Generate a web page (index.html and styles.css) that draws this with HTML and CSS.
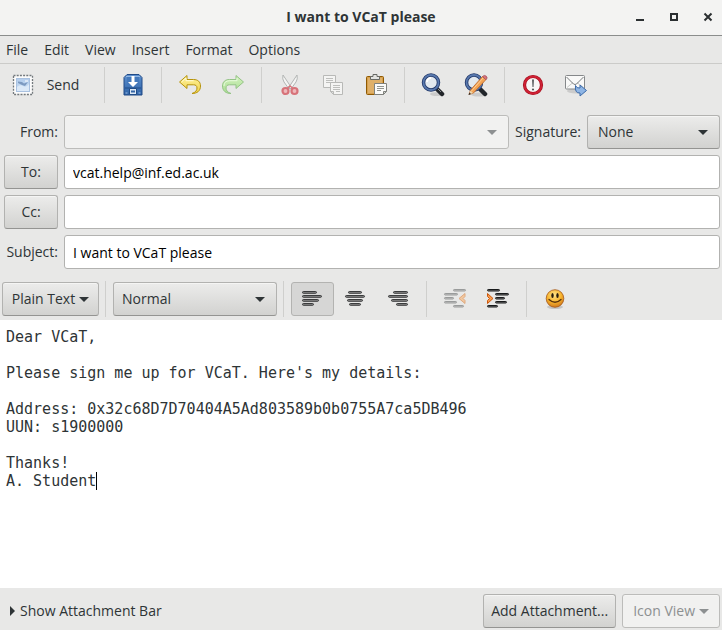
FILE: index.html
```html
<!DOCTYPE html>
<html lang="en">
<head>
<meta charset="utf-8">
<meta name="viewport" content="width=device-width, initial-scale=1">
<title>I want to VCaT please</title>
<link rel="stylesheet" href="styles.css">
</head>
<body>
<svg class="defs" width="0" height="0" aria-hidden="true">
  <defs>
    <linearGradient id="gold" x1="0" y1="0" x2="0" y2="1"><stop offset="0" stop-color="#fff3a0"/><stop offset="1" stop-color="#f0d24a"/></linearGradient>
    <linearGradient id="leaf" x1="0" y1="0" x2="0" y2="1"><stop offset="0" stop-color="#d3f2be"/><stop offset="1" stop-color="#a9dd92"/></linearGradient>
    <linearGradient id="ink" x1="0" y1="0" x2="0" y2="1"><stop offset="0" stop-color="#5d90cf"/><stop offset="1" stop-color="#2e62a6"/></linearGradient>
    <linearGradient id="sky" x1="0" y1="0" x2="0" y2="1"><stop offset="0" stop-color="#b3cdec"/><stop offset="1" stop-color="#c9def3"/></linearGradient>
    <radialGradient id="face" cx=".45" cy=".3" r=".75"><stop offset="0" stop-color="#ffe38a"/><stop offset=".55" stop-color="#f7b32c"/><stop offset="1" stop-color="#c9701a"/></radialGradient>
  </defs>
</svg>

<header class="titlebar">
  <h1 class="title">I want to VCaT please</h1>
  <div class="window-buttons">
    <button class="window-button" type="button" aria-label="Minimize"><svg width="10" height="10" viewBox="0 0 10 10"><path d="M1 8h8" stroke="#2b2f31" stroke-width="2"/></svg></button>
    <button class="window-button" type="button" aria-label="Maximize"><svg width="10" height="10" viewBox="0 0 10 10"><path d="M2 2h6v6H2z" fill="none" stroke="#2b2f31" stroke-width="2"/></svg></button>
    <button class="window-button" type="button" aria-label="Close"><svg width="10" height="10" viewBox="0 0 10 10"><path d="M1.500 1.500l7 7M8.500 1.500l-7 7" stroke="#2b2f31" stroke-width="2"/></svg></button>
  </div>
</header>

<nav class="menubar">
  <button type="button">File</button>
  <button type="button">Edit</button>
  <button type="button">View</button>
  <button type="button">Insert</button>
  <button type="button">Format</button>
  <button type="button">Options</button>
</nav>

<div class="toolbar" role="toolbar" aria-label="Message">
  <button class="tool send" type="button">
    <svg width="24" height="24" viewBox="0 0 24 24"><rect x="2.500" y="2.500" width="19" height="19" fill="#fbfbfb" stroke="#73797d" stroke-width="1.300" stroke-dasharray="2 1.200"/><rect x="5.500" y="5.500" width="13" height="13" fill="url(#sky)" stroke="#a9c1e0"/><path d="M6 14q3-3 6-1t6-2v7H6z" fill="#dce9f7"/><path d="M7 8.500l4 .5 2 1.500 4-1.500-3 4-3-1-4-2z" fill="#7d9ac0"/><path d="M14 8h3" stroke="#fff"/></svg>
    Send
  </button>
  <span class="separator"></span>
  <button class="tool" type="button" aria-label="Save draft"><svg width="24" height="24" viewBox="0 0 24 24"><path d="M6 1.500h12l3 3v17.500H3V4.500z" fill="url(#ink)" stroke="#204a87"/><path d="M5 3.500h14" stroke="#91b7e4"/><path d="M6 4h12v9H6z" fill="#4378bb"/><path d="M10.500 3h3v6h3.500l-5 5-5-5h3.500z" fill="#fff"/><path d="M4 15h16" stroke="#1f4c88"/><path d="M8.500 15.500h7v6h-7z" fill="#dce8f5" stroke="#1f4c88"/><path d="M10 17.500h4v2h-4z" fill="#3465a4"/><path d="M4.500 20h2M17.500 20h2" stroke="#9fc0e8"/></svg></button>
  <span class="separator"></span>
  <button class="tool" type="button" aria-label="Undo"><svg width="24" height="24" viewBox="0 0 24 24"><path d="M1.500 9L9 2.500V6.500h6.500c4.500 0 7 2.500 7 6.500 0 5-3.500 7.500-8.500 7.500 3.500-1.200 5-3 5-5.500 0-2.200-1.300-3.200-3.500-3.200H9V15.500z" fill="url(#gold)" stroke="#b6930b" stroke-linejoin="round"/><path d="M3.500 9L8 5v2.700h7.500" fill="none" stroke="#fffbd4"/></svg></button>
  <button class="tool" type="button" aria-label="Redo"><svg width="24" height="24" viewBox="0 0 24 24"><path d="M22.500 9L15 2.500V6.500H8.500c-4.500 0-7 2.500-7 6.500 0 5 3.500 7.500 8.500 7.500-3.500-1.200-5-3-5-5.500 0-2.200 1.300-3.200 3.500-3.200H15V15.500z" fill="url(#leaf)" stroke="#94c386" stroke-linejoin="round"/><path d="M3 13q0-5 5.500-5.300H16V5" fill="none" stroke="#e6fadb"/></svg></button>
  <span class="separator"></span>
  <button class="tool" type="button" aria-label="Cut"><svg width="24" height="24" viewBox="0 0 24 24"><path d="M5 2q-1 4 1 7l5 7 2-2z" fill="#f5f5f4" stroke="#b2b5b4"/><path d="M19 2q1 4-1 7l-5 7-2-2z" fill="#f5f5f4" stroke="#b2b5b4"/><circle cx="7.500" cy="18" r="3" fill="#eeb9bc" stroke="#d7737a" stroke-width="2.200"/><circle cx="16.500" cy="18" r="3" fill="#eeb9bc" stroke="#d7737a" stroke-width="2.200"/><path d="M9.500 15l2.500-2 2.500 2" fill="none" stroke="#d7737a" stroke-width="1.500"/></svg></button>
  <button class="tool" type="button" aria-label="Copy"><svg width="24" height="24" viewBox="0 0 24 24"><path d="M2.500 2.500h12v12h-12z" fill="#f4f4f3" stroke="#b8b9b7"/><path d="M5 5.500h7M5 7.500h7M5 9.500h5" stroke="#bdbebc"/><path d="M9.500 9.500h12v12h-9l-3-3z" fill="#f4f4f3" stroke="#b8b9b7"/><path d="M12 12.500h7M12 14.500h7M12 16.500h7M15 18.500h4" stroke="#bdbebc"/><path d="M9.500 18.500h3v3z" fill="#ddd" stroke="#b8b9b7"/></svg></button>
  <button class="tool" type="button" aria-label="Paste"><svg width="24" height="24" viewBox="0 0 24 24"><rect x="2.500" y="3.500" width="17" height="18" rx="1" fill="#d5a04d" stroke="#8f5902"/><path d="M4 5h14v15H4z" fill="#dfb069"/><path d="M9 1.500h4v2h2.500v3h-9v-3H9z" fill="#e2e3e1" stroke="#676965"/><path d="M10.500 10.500h12v8l-3 3h-9z" fill="#fbfbfa" stroke="#80827e"/><path d="M13 13.500h7M13 15.500h7M13 17.500h4" stroke="#91948f"/><path d="M22.500 18.500h-3v3z" fill="#d3d7cf" stroke="#80827e"/></svg></button>
  <span class="separator"></span>
  <button class="tool" type="button" aria-label="Find"><svg width="24" height="24" viewBox="0 0 24 24"><ellipse cx="16" cy="21" rx="7" ry="2" fill="#000" opacity=".12"/><path d="M15 15l6 6" stroke="#22262a" stroke-width="4.500" stroke-linecap="round"/><path d="M17 16l3 3" stroke="#8b8f92"/><circle cx="10" cy="9.500" r="7.500" fill="#e3e9ef" stroke="#23396a" stroke-width="3.500"/><circle cx="10" cy="9.500" r="7.500" fill="none" stroke="#5878ad" stroke-width="1.800"/><path d="M6 9a4 4 0 0 1 4-4" fill="none" stroke="#fff" stroke-width="2"/></svg></button>
  <button class="tool" type="button" aria-label="Replace"><svg width="24" height="24" viewBox="0 0 24 24"><ellipse cx="15" cy="21.500" rx="8" ry="2" fill="#000" opacity=".12"/><path d="M15 15l6 6" stroke="#22262a" stroke-width="4.500" stroke-linecap="round"/><circle cx="10" cy="9.500" r="7.500" fill="#e3e9ef" stroke="#23396a" stroke-width="3.500"/><circle cx="10" cy="9.500" r="7.500" fill="none" stroke="#5878ad" stroke-width="1.800"/><path d="M5 21.500l1.500-4.500L18.500 3.500l3.500 3L9.500 20z" fill="#f3a354" stroke="#b9652a" stroke-width=".8"/><path d="M7.500 18L19 5" stroke="#ffd09a"/><path d="M18.500 3.500q2-2 3.800-.3t-.3 3.600z" fill="#d8737d" stroke="#a65259" stroke-width=".8"/><path d="M5 21.500l1.500-4 2.500 2.500z" fill="#ecd7af"/><path d="M4.500 22l1-2.500 1.500 1.500z" fill="#222"/></svg></button>
  <span class="separator"></span>
  <button class="tool" type="button" aria-label="High priority"><svg width="24" height="24" viewBox="0 0 24 24"><circle cx="12" cy="12" r="8.500" fill="#f7f5f5" stroke="#a5101f" stroke-width="3.200"/><circle cx="12" cy="12" r="8.500" fill="none" stroke="#cf2135" stroke-width="1.800"/><path d="M11 6.500h2l-.5 7.500h-1z" fill="#55585b"/><circle cx="12" cy="16.500" r="1.100" fill="#55585b"/></svg></button>
  <button class="tool" type="button" aria-label="Request read receipt"><svg width="24" height="24" viewBox="0 0 24 24"><ellipse cx="12" cy="18" rx="9" ry="2.500" fill="#000" opacity=".12"/><rect x="1.500" y="2.500" width="19" height="13.500" rx="1" fill="#f9f9f8" stroke="#85888a"/><path d="M3 14.500l6-5M19 14.500l-6-5" stroke="#c5c7c6"/><path d="M2.500 4l7 7q1.500 1 3 0l7-7" fill="none" stroke="#777b7d"/><path d="M11.500 12.500q1 3 4.500 2.500v-3l6.500 5.500-6.500 5.500v-3q-5.500.5-4.500-7.500z" fill="#8eb5e5" stroke="#3a69a8" stroke-linejoin="round"/></svg></button>
</div>

<form class="headers">
  <label class="caption" for="from">From:</label>
  <div class="from-row">
    <span class="combo from"><select id="from" disabled><option></option></select></span>
    <label for="signature">Signature:</label>
    <span class="combo signature"><select id="signature"><option>None</option></select></span>
  </div>
  <button class="button" type="button" id="to-label">To:</button>
  <input class="entry" type="text" aria-labelledby="to-label" value="vcat.help@inf.ed.ac.uk">
  <button class="button" type="button" id="cc-label">Cc:</button>
  <input class="entry" type="text" aria-labelledby="cc-label">
  <label class="caption" for="subject">Subject:</label>
  <input class="entry" type="text" id="subject" value="I want to VCaT please">
</form>

<div class="formatbar" role="toolbar" aria-label="Formatting">
  <button class="button mode" type="button">Plain Text<span class="arrow"></span></button>
  <span class="separator"></span>
  <span class="combo style"><select aria-label="Paragraph style"><option>Normal</option></select></span>
  <span class="separator"></span>
  <button class="tool active" type="button" aria-label="Align left" aria-pressed="true"><svg width="24" height="24" viewBox="0 0 24 24"><g fill="#8a8a8a" stroke="#2c2e2f" stroke-width=".9"><rect x="2.500" y="4.500" width="14" height="1.800" rx=".9"/><rect x="2.500" y="8.500" width="19" height="1.800" rx=".9"/><rect x="2.500" y="12.500" width="16" height="1.800" rx=".9"/><rect x="2.500" y="16.500" width="11" height="1.800" rx=".9"/></g></svg></button>
  <button class="tool" type="button" aria-label="Align centre"><svg width="24" height="24" viewBox="0 0 24 24"><g fill="#8a8a8a" stroke="#2c2e2f" stroke-width=".9"><rect x="5.500" y="4.500" width="13" height="1.800" rx=".9"/><rect x="2.500" y="8.500" width="19" height="1.800" rx=".9"/><rect x="4.500" y="12.500" width="15" height="1.800" rx=".9"/><rect x="6.500" y="16.500" width="11" height="1.800" rx=".9"/></g></svg></button>
  <button class="tool" type="button" aria-label="Align right"><svg width="24" height="24" viewBox="0 0 24 24"><g fill="#8a8a8a" stroke="#2c2e2f" stroke-width=".9"><rect x="7.500" y="4.500" width="14" height="1.800" rx=".9"/><rect x="2.500" y="8.500" width="19" height="1.800" rx=".9"/><rect x="5.500" y="12.500" width="16" height="1.800" rx=".9"/><rect x="10.500" y="16.500" width="11" height="1.800" rx=".9"/></g></svg></button>
  <span class="separator"></span>
  <button class="tool" type="button" aria-label="Decrease indent" disabled><svg width="24" height="24" viewBox="0 0 24 24"><g fill="#c4c4c4" stroke="#999b9b"><rect x="10.500" y="2.500" width="12" height="1.500" rx=".7"/><rect x="1.500" y="6.500" width="13" height="1.500" rx=".7"/><rect x="1.500" y="10.500" width="9" height="1.500" rx=".7"/><rect x="1.500" y="14.500" width="12" height="1.500" rx=".7"/><rect x="10.500" y="18.500" width="10" height="1.500" rx=".7"/></g><path d="M22 6.500v3L20 11.500l2 2v3l-6-5z" fill="#f1c79f" stroke="#dfa97f"/></svg></button>
  <button class="tool" type="button" aria-label="Increase indent"><svg width="24" height="24" viewBox="0 0 24 24"><g fill="#777" stroke="#17191a"><rect x="1.500" y="2.500" width="12" height="1.500" rx=".7"/><rect x="9.500" y="6.500" width="13" height="1.500" rx=".7"/><rect x="9.500" y="10.500" width="9" height="1.500" rx=".7"/><rect x="9.500" y="14.500" width="11" height="1.500" rx=".7"/><rect x="1.500" y="18.500" width="10" height="1.500" rx=".7"/></g><path d="M1.500 6.500v3l2 2-2 2v3l5.500-5z" fill="#f69a4c" stroke="#cb560b"/></svg></button>
  <span class="separator"></span>
  <button class="tool" type="button" aria-label="Insert emoticon"><svg width="24" height="24" viewBox="0 0 24 24"><ellipse cx="12" cy="20" rx="8" ry="2" fill="#000" opacity=".15"/><circle cx="12" cy="11.500" r="8.800" fill="url(#face)" stroke="#a45717" stroke-width=".8"/><ellipse cx="9.500" cy="8.500" rx="1.200" ry="2.600" fill="#271b0c"/><ellipse cx="14.500" cy="8.500" rx="1.200" ry="2.600" fill="#271b0c"/><path d="M6 12.500q6 5.500 12 0" fill="none" stroke="#56300c" stroke-width="1.300" stroke-linecap="round"/></svg></button>
</div>

<main class="editor">
  <textarea class="body-text" aria-label="Message body" spellcheck="false">Dear VCaT,

Please sign me up for VCaT. Here's my details:

Address: 0x32c68D7D70404A5Ad803589b0b0755A7ca5DB496
UUN: s1900000

Thanks!
A. Student</textarea>
  <span class="caret"></span>
</main>

<footer class="footer">
  <button class="expander" type="button"><span class="disclosure"></span>Show Attachment Bar</button>
  <button class="button" type="button">Add Attachment...</button>
  <button class="button view" type="button" disabled>Icon View<span class="arrow"></span></button>
</footer>
</body>
</html>
```
FILE: styles.css
```css
* {
  box-sizing: border-box;
}

body {
  display: flex;
  flex-direction: column;
  min-height: 100vh;
  margin: 0;
  background: #e8e8e7;
  color: #2e3436;
  font: 14px/20px "Open Sans", "Noto Sans", sans-serif;
}

button,
input,
select {
  margin: 0;
  color: inherit;
  font: inherit;
}

svg {
  display: block;
}

.defs {
  position: absolute;
}

.titlebar {
  display: grid;
  grid-template-columns: 1fr auto 1fr;
  align-items: center;
  height: 36px;
  padding: 0 9px 2px;
  border-bottom: 1px solid #8b8d8c;
  background: #f3f3f2;
}

.title {
  grid-column: 2;
  margin: 0;
  font-size: 14px;
  font-weight: 700;
}

.window-buttons {
  display: flex;
  justify-content: flex-end;
  gap: 24px;
}

.window-button,
.menubar button,
.tool,
.expander {
  padding: 0;
  border: 0;
  background: none;
}

.menubar {
  display: flex;
  gap: 16px;
  height: 28px;
  padding: 0 6px;
  border-bottom: 1px solid #cbcbc9;
}

.toolbar,
.formatbar {
  display: flex;
  align-items: center;
  padding: 0 2px;
}

.toolbar {
  height: 42px;
}

.tool {
  display: flex;
  align-items: center;
  justify-content: center;
  width: 43px;
  height: 34px;
  padding-right: 1px;
  border: 1px solid transparent;
  border-radius: 3px;
}

.send {
  gap: 12px;
  width: 96px;
  padding-right: 10px;
}

.active {
  border-color: #b3b3b1;
  background: #d6d6d5;
}

.separator {
  flex: none;
  width: 1px;
  height: 36px;
  margin: 0 7px 0 6px;
  background: #cfcfcd;
}

.headers {
  display: grid;
  grid-template-columns: 54px 1fr;
  align-items: center;
  gap: 6px;
  margin: 0;
  padding: 9px 2px 12px 4px;
}

.caption {
  justify-self: end;
  white-space: nowrap;
}

.from-row {
  display: flex;
  align-items: center;
  gap: 6px;
}

.button,
.entry,
.combo select {
  height: 34px;
  border: 1px solid #b2b2b0;
  border-radius: 3px;
}

.button,
.combo select {
  border-bottom-color: #949492;
  background: linear-gradient(#ececeb, #d2d2d0);
  box-shadow: inset 0 1px #f5f5f4;
}

.button {
  display: flex;
  align-items: center;
  justify-content: center;
  gap: 4px;
  padding: 0 7px;
  white-space: nowrap;
}

.button:disabled,
.combo select:disabled {
  border-color: #bcbcba;
  background: #f1f1f0;
  color: #8d9091;
  opacity: 1;
}

.entry {
  min-width: 0;
  padding: 0 8px;
  background: #fff;
  color: #000;
}

.combo {
  position: relative;
  display: block;
}

.combo select {
  width: 100%;
  padding: 0 24px 0 8px;
  appearance: none;
}

.combo::after,
.arrow {
  border: 5px solid transparent;
  border-top-color: #2e3436;
  border-bottom-width: 0;
}

.combo::after {
  position: absolute;
  top: 15px;
  right: 12px;
  content: "";
  pointer-events: none;
}

.from {
  flex: 1;
}

.from::after,
.button:disabled .arrow {
  border-top-color: #8d9091;
}

.signature {
  width: 133px;
}

.signature select {
  padding-left: 10px;
}

.formatbar {
  padding-bottom: 3px;
}

.mode {
  width: 97px;
}

.style {
  width: 164px;
}

.editor {
  position: relative;
  display: flex;
  flex: 1;
  background: #fff;
  font: 15px/18px "DejaVu Sans Mono", monospace;
}

.body-text {
  flex: 1;
  margin: 0;
  padding: 8px 6px;
  border: 0;
  outline: 0;
  background: none;
  color: #2e3436;
  font: inherit;
  resize: none;
}

.caret {
  position: absolute;
  top: calc(8px + 8 * 18px);
  left: calc(6px + 10ch);
  width: 1px;
  height: 18px;
  background: #000;
}

.footer {
  display: flex;
  align-items: center;
  gap: 6px;
  padding: 6px 2px 2px 10px;
}

.view {
  padding: 0 10px;
}

.expander {
  display: flex;
  align-items: center;
  gap: 5px;
  margin-right: auto;
}

.disclosure {
  border: 5px solid transparent;
  border-left-color: #2e3436;
  border-right-width: 0;
}
```
